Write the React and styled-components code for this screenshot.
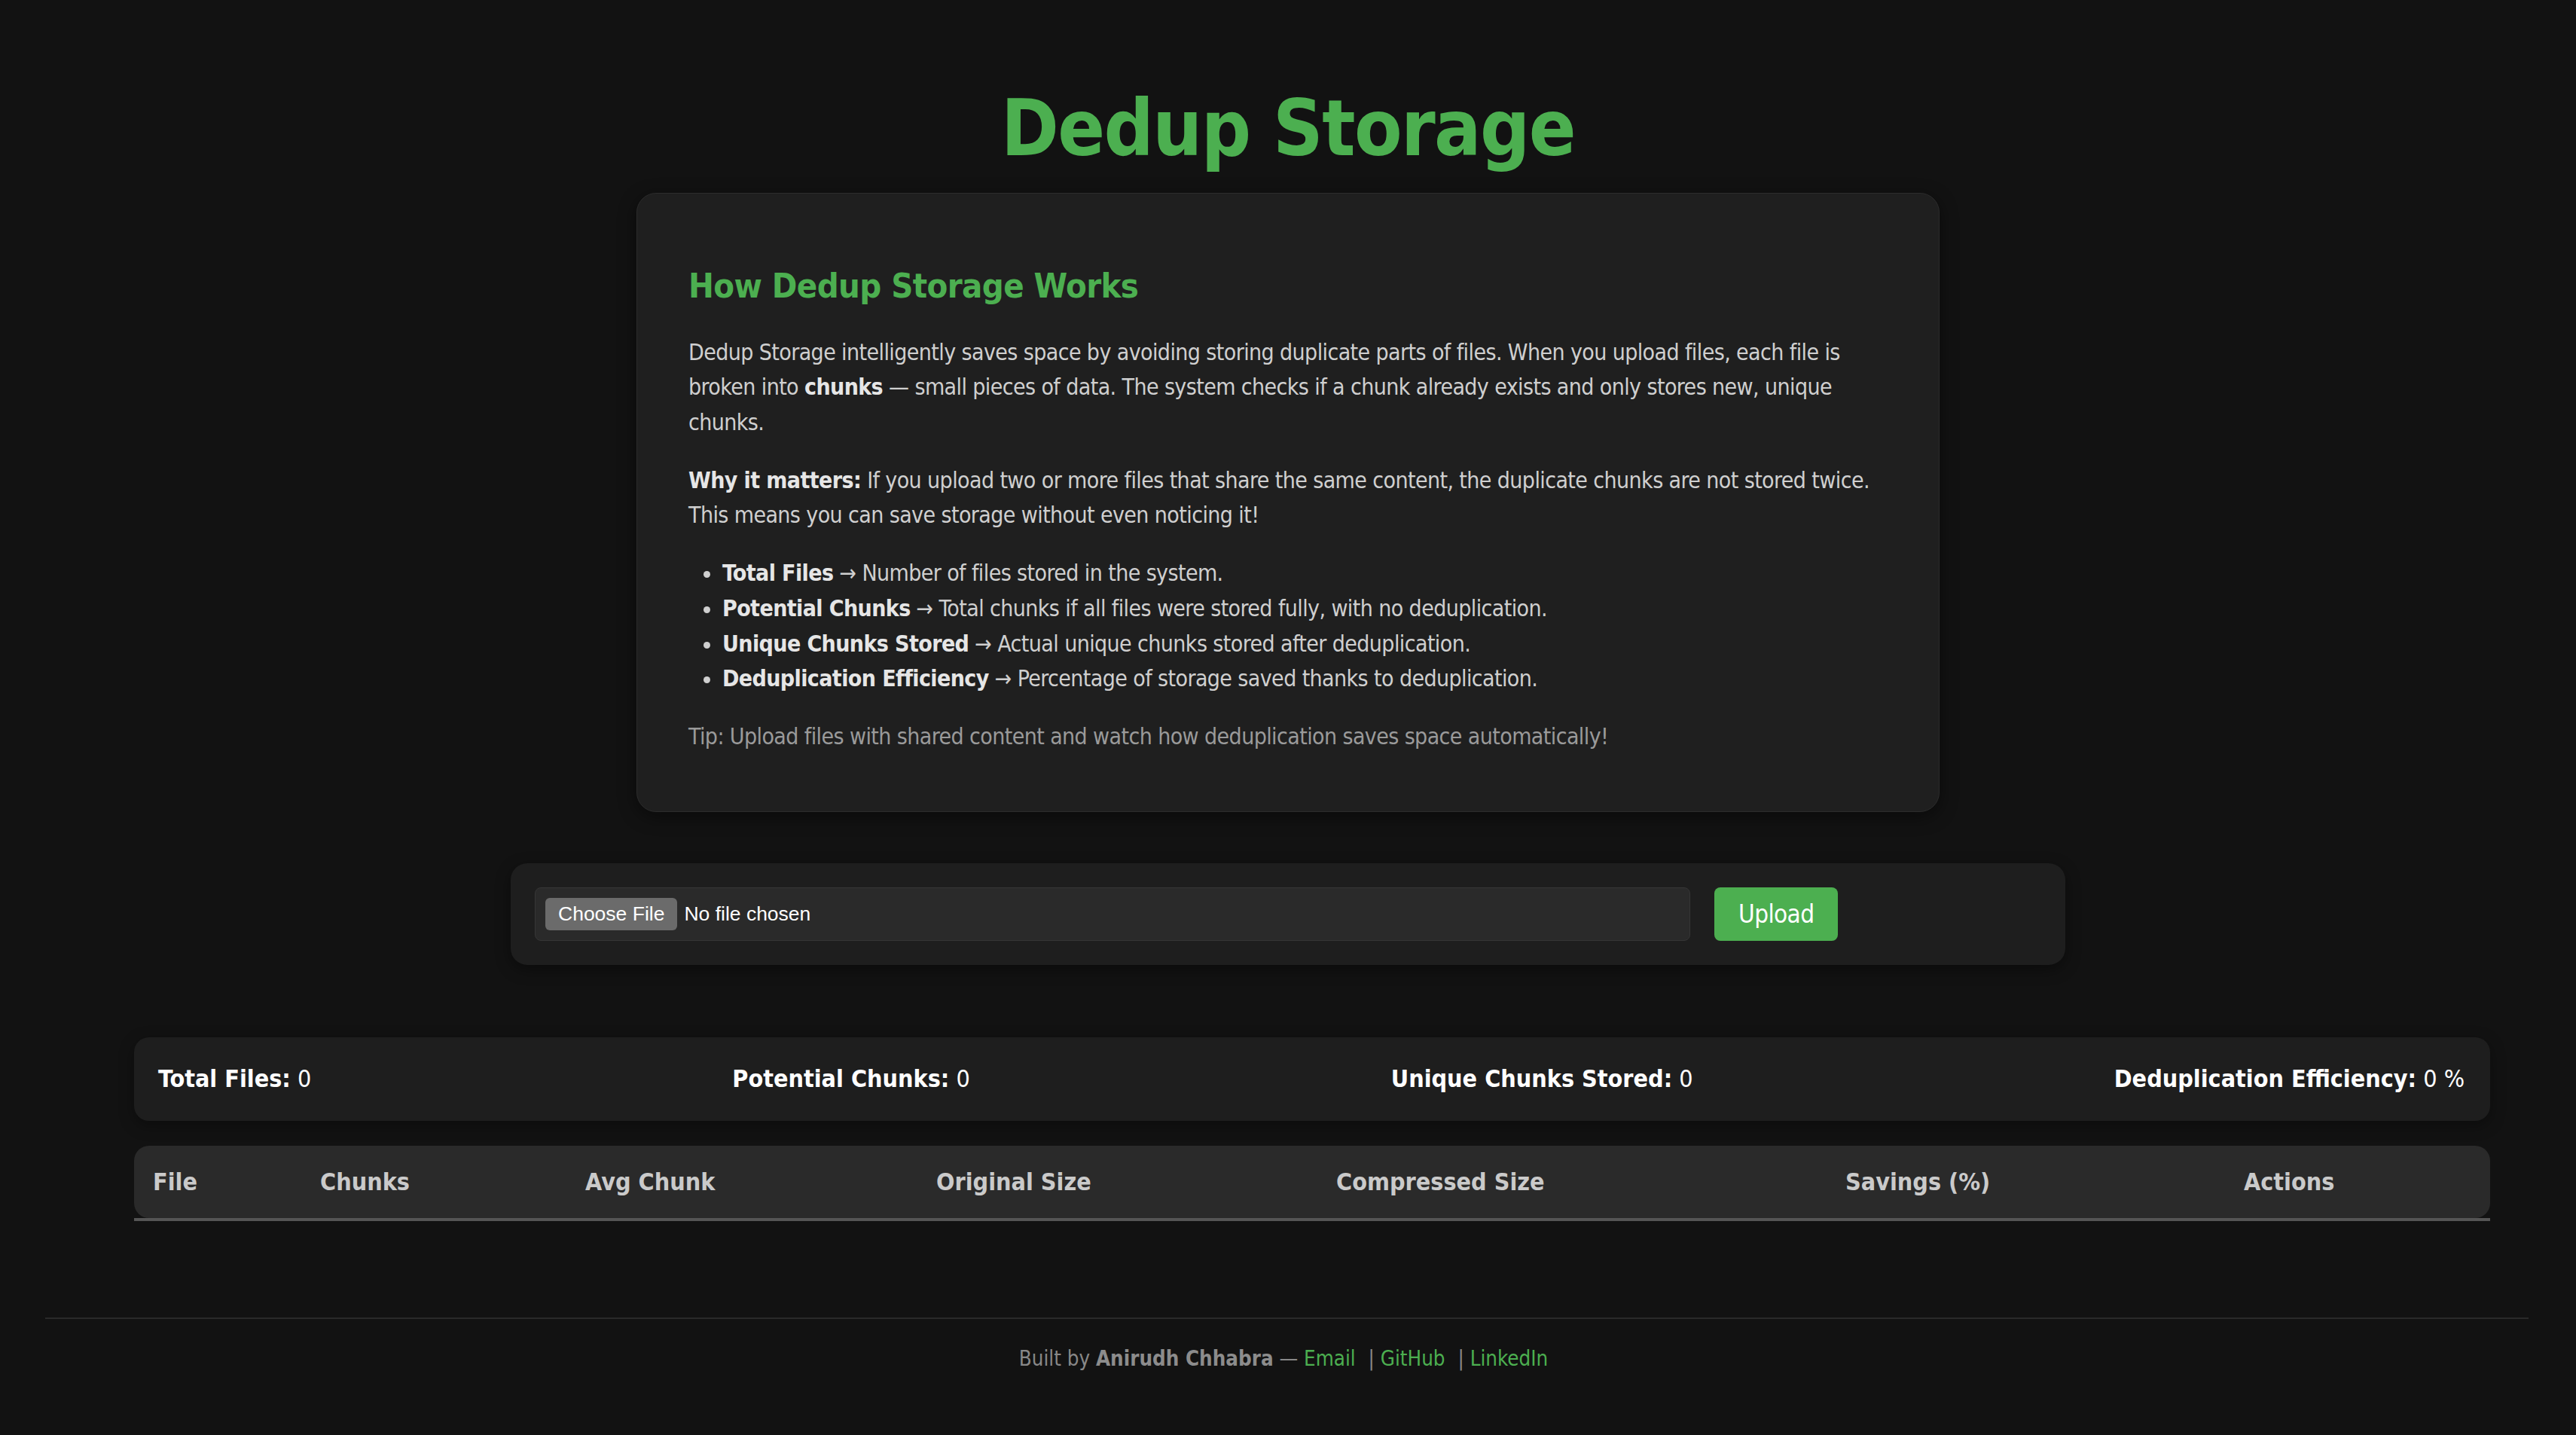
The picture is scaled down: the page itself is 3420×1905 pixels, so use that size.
import React from 'react';
import styled, { createGlobalStyle } from 'styled-components';

const GlobalStyle = createGlobalStyle`
  html, body {
    margin: 0;
    padding: 0;
    background: #121212;
  }
  body {
    font-family: "DejaVu Sans Condensed", "DejaVu Sans", sans-serif;
    color: #e0e0e0;
  }
`;

const Page = styled.div`
  min-height: 1905px;
  padding-top: 109px;
  box-sizing: border-box;
`;

const Title = styled.h1`
  margin: 0 0 23px;
  text-align: center;
  font-size: 103px;
  line-height: 1.2;
  font-weight: 700;
  letter-spacing: -1.6px;
  color: #4caf50;
`;

const InfoCard = styled.section`
  width: 1730px;
  box-sizing: border-box;
  margin: 0 auto;
  padding: 44px 68px 45px;
  background: #1f1f1f;
  border: 1px solid #2c2c2c;
  border-radius: 26px;
  box-shadow: 0 6px 24px rgba(0, 0, 0, 0.45);

  h2 {
    margin: 52px 0 38px;
    font-size: 45px;
    line-height: 1.2;
    font-weight: 700;
    letter-spacing: -0.6px;
    color: #4caf50;
  }

  p, ul {
    margin: 30px 0;
    font-size: 30px;
    line-height: 46.7px;
    letter-spacing: -0.6px;
    color: #cfcfcf;
  }

  ul {
    padding-left: 45px;
  }

  strong {
    color: #e6e6e6;
  }
`;

const Tip = styled.p`
  && {
    color: #9a9a9a;
  }
`;

const UploadPanel = styled.form`
  width: 2064px;
  box-sizing: border-box;
  margin: 68px auto 0;
  padding: 32px;
  display: flex;
  align-items: center;
  gap: 32px;
  background: #1e1e1e;
  border-radius: 22px;
  box-shadow: 0 6px 20px rgba(0, 0, 0, 0.4);
`;

const FileInput = styled.input`
  width: 1534px;
  height: 71px;
  box-sizing: border-box;
  padding: 13px;
  background: #2a2a2a;
  border: 1px solid #363636;
  border-radius: 8px;
  color: #fff;
  font-family: "Liberation Sans", Arial, sans-serif;
  font-size: 26.5px;

  &::file-selector-button {
    height: 43px;
    margin-right: 9px;
    padding: 0 17px;
    border: none;
    border-radius: 6px;
    background: #6b6b6b;
    color: #fff;
    font-family: "Liberation Sans", Arial, sans-serif;
    font-size: 26.5px;
  }
`;

const UploadButton = styled.button`
  height: 71px;
  padding: 0 32px;
  border: none;
  border-radius: 8px;
  background: #4caf50;
  color: #fff;
  font-family: "DejaVu Sans Condensed", "DejaVu Sans", sans-serif;
  font-size: 33px;
  letter-spacing: -0.6px;
  cursor: pointer;
`;

const StatsBar = styled.div`
  width: 3128px;
  height: 111px;
  box-sizing: border-box;
  margin: 96px 0 0 178px;
  padding: 0 34px 0 32px;
  display: flex;
  align-items: center;
  justify-content: space-between;
  background: #1e1e1e;
  border-radius: 20px;
  box-shadow: 0 6px 20px rgba(0, 0, 0, 0.35);
  font-size: 32px;
  color: #fff;
`;

const Stat = styled.div`
  strong { font-weight: 700; }
`;

const Table = styled.table`
  width: 3128px;
  margin: 33px 0 0 178px;
  border-collapse: separate;
  border-spacing: 0;
  border-bottom: 4px solid #555;
  table-layout: fixed;

  th {
    padding: 29px 25px;
    background: #2a2a2a;
    text-align: left;
    font-size: 32px;
    line-height: 38px;
    font-weight: 700;
    color: #cacaca;
    white-space: nowrap;
  }

  th:first-child { border-radius: 20px 0 0 20px; }
  th:last-child { border-radius: 0 20px 20px 0; }
`;

const Footer = styled.footer`
  margin: 128px 63px 0 60px;
  padding-top: 36px;
  border-top: 2px solid #2a2a2a;
  text-align: center;
  font-size: 27.5px;
  color: #888;

  strong { color: #8c8c8c; }
`;

const FooterLink = styled.a`
  color: #4caf50;
  text-decoration: none;
  margin-right: 9px;
`;

const columns = [
  { label: 'File', width: 222 },
  { label: 'Chunks', width: 352 },
  { label: 'Avg Chunk', width: 466 },
  { label: 'Original Size', width: 531 },
  { label: 'Compressed Size', width: 676 },
  { label: 'Savings (%)', width: 529 },
  { label: 'Actions', width: 352 },
];

const stats = [
  ['Total Files:', '0'],
  ['Potential Chunks:', '0'],
  ['Unique Chunks Stored:', '0'],
  ['Deduplication Efficiency:', '0 %'],
];

export default function App() {
  return (
    <Page>
      <GlobalStyle />
      <Title>Dedup Storage</Title>

      <InfoCard>
        <h2>How Dedup Storage Works</h2>
        <p>
          Dedup Storage intelligently saves space by avoiding storing duplicate parts of files. When you upload
          files, each file is broken into <strong>chunks</strong> — small pieces of data. The system checks if a
          chunk already exists and only stores new, unique chunks.
        </p>
        <p>
          <strong>Why it matters:</strong> If you upload two or more files that share the same content, the
          duplicate chunks are not stored twice. This means you can save storage without even noticing it!
        </p>
        <ul>
          <li><strong>Total Files</strong> → Number of files stored in the system.</li>
          <li><strong>Potential Chunks</strong> → Total chunks if all files were stored fully, with no deduplication.</li>
          <li><strong>Unique Chunks Stored</strong> → Actual unique chunks stored after deduplication.</li>
          <li><strong>Deduplication Efficiency</strong> → Percentage of storage saved thanks to deduplication.</li>
        </ul>
        <Tip>Tip: Upload files with shared content and watch how deduplication saves space automatically!</Tip>
      </InfoCard>

      <UploadPanel onSubmit={(e) => e.preventDefault()}>
        <FileInput type="file" />
        <UploadButton type="submit">Upload</UploadButton>
      </UploadPanel>

      <StatsBar>
        {stats.map(([label, value]) => (
          <Stat key={label}>
            <strong>{label}</strong> {value}
          </Stat>
        ))}
      </StatsBar>

      <Table>
        <colgroup>
          {columns.map((c) => (
            <col key={c.label} style={{ width: c.width }} />
          ))}
        </colgroup>
        <thead>
          <tr>
            {columns.map((c) => (
              <th key={c.label}>{c.label}</th>
            ))}
          </tr>
        </thead>
      </Table>

      <Footer>
        Built by <strong>Anirudh Chhabra</strong> — <FooterLink href="#">Email</FooterLink> |{' '}
        <FooterLink href="#">GitHub</FooterLink> | <FooterLink href="#">LinkedIn</FooterLink>
      </Footer>
    </Page>
  );
}
